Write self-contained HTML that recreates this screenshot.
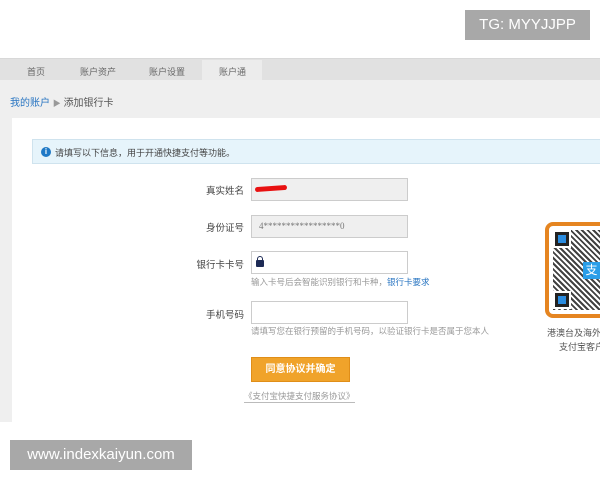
<!DOCTYPE html>
<html><head><meta charset="utf-8"><style>
*{margin:0;padding:0;box-sizing:border-box}
body{width:600px;height:480px;background:#fff;font-family:"Liberation Sans","Noto Sans CJK SC",sans-serif;position:relative;overflow:hidden;font-size:9px;color:#555}
.a{position:absolute;white-space:nowrap}
.tag{background:#a8a8a8;color:#fff;font-size:15px;line-height:30px;text-align:center}
.inp{border:1px solid #ccc;height:23px;background:#fff}
.lbl{width:64px;text-align:right;font-size:9.5px;color:#444}
</style></head><body>
<div class="a tag" style="left:465px;top:10px;width:125px;height:30px">TG: MYYJJPP</div>
<div class="a" style="left:0;top:58px;width:600px;height:364px;background:#efefef"></div>
<div class="a" style="left:0;top:58px;width:600px;height:22px;background:#e1e1e1;border-top:1px solid #d8d8d8"></div>
<div class="a" style="left:202px;top:60px;width:60px;height:20px;background:#ececec"></div>
<div class="a" style="left:27px;top:65px;font-size:9px;color:#666">首页</div>
<div class="a" style="left:80px;top:65px;font-size:9px;color:#666">账户资产</div>
<div class="a" style="left:149px;top:65px;font-size:9px;color:#666">账户设置</div>
<div class="a" style="left:219px;top:65px;font-size:9px;color:#666">账户通</div>
<div class="a" style="left:10px;top:94px;font-size:10px;color:#2a76c2">我的账户 <span style="color:#999;font-size:8px">▶</span> <span style="color:#555">添加银行卡</span></div>
<div class="a" style="left:12px;top:118px;width:588px;height:304px;background:#fff"></div>
<div class="a" style="left:32px;top:139px;width:568px;height:25px;background:#e6f4fb;border:1px solid #cfe3ee;border-right:none"></div>
<div class="a" style="left:41px;top:147px;width:10px;height:10px;border-radius:50%;background:#1f79c6;color:#fff;font-size:8px;line-height:10px;text-align:center;font-weight:bold">i</div>
<div class="a" style="left:55px;top:146px;font-size:9px;color:#444">请填写以下信息，用于开通快捷支付等功能。</div>

<div class="a lbl" style="left:180px;top:183px">真实姓名</div>
<div class="a inp" style="left:251px;top:178px;width:157px;background:#efefef"></div>
<div class="a" style="left:255px;top:186px;width:32px;height:5px;background:#e81010;border-radius:3px;transform:rotate(-4deg)"></div>
<div class="a lbl" style="left:180px;top:220px">身份证号</div>
<div class="a inp" style="left:251px;top:215px;width:157px;background:#efefef"></div>
<div class="a" style="left:259px;top:221px;font-size:9px;color:#777;font-family:'Liberation Serif',serif">4*****************0</div>
<div class="a lbl" style="left:180px;top:257px">银行卡卡号</div>
<div class="a inp" style="left:251px;top:251px;width:157px"></div>
<div class="a" style="left:256px;top:260px;width:8px;height:7px;background:#1d2a55;border-radius:1px"></div>
<div class="a" style="left:257px;top:256px;width:6px;height:6px;border:1.5px solid #1d2a55;border-bottom:none;border-radius:3px 3px 0 0"></div>
<div class="a" style="left:251px;top:276px;font-size:8.5px;color:#999">输入卡号后会智能识别银行和卡种，<span style="color:#2a76c2">银行卡要求</span></div>
<div class="a lbl" style="left:180px;top:307px">手机号码</div>
<div class="a inp" style="left:251px;top:301px;width:157px"></div>
<div class="a" style="left:251px;top:325px;font-size:8.5px;color:#999">请填写您在银行预留的手机号码，以验证银行卡是否属于您本人</div>
<div class="a" style="left:251px;top:357px;width:99px;height:25px;background:#f0a32a;border:1px solid #e08e18;color:#fff;font-size:10px;font-weight:bold;line-height:23px;text-align:center">同意协议并确定</div>
<div class="a" style="left:244px;top:390px;font-size:8.5px;color:#999;border-bottom:1px solid #bbb">《支付宝快捷支付服务协议》</div>

<div class="a" style="left:545px;top:222px;width:70px;height:96px;border:4px solid #e58521;border-radius:8px;background:#fff"></div>
<div class="a" style="left:553px;top:230px;width:50px;height:80px;background:repeating-linear-gradient(45deg,#222 0 2px,#fff 2px 4px),#222;opacity:.85"></div>
<div class="a" style="left:555px;top:232px;width:14px;height:14px;border:3px solid #222;background:#2a8ce0;outline:2px solid #fff"></div>
<div class="a" style="left:555px;top:293px;width:14px;height:14px;border:3px solid #222;background:#2a8ce0;outline:2px solid #fff"></div>
<div class="a" style="left:583px;top:262px;width:17px;height:17px;background:#2a9ee8;color:#fff;font-size:12px;line-height:17px;text-align:center">支</div>
<div class="a" style="left:547px;top:326px;font-size:9px;color:#555">港澳台及海外用</div>
<div class="a" style="left:559px;top:340px;font-size:9px;color:#555">支付宝客户</div>

<div class="a tag" style="left:10px;top:440px;width:182px;height:30px">www.indexkaiyun.com</div>
</body></html>
